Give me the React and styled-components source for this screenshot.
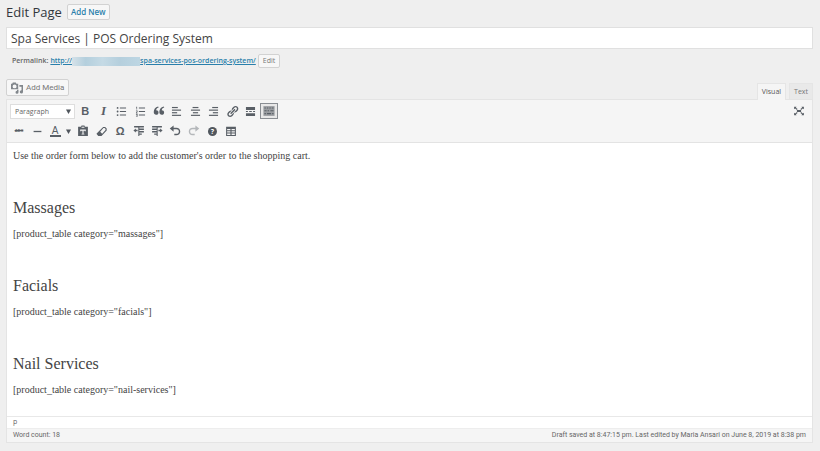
import React, { useState } from 'react';
import styled, { createGlobalStyle, css } from 'styled-components';

const GlobalStyle = createGlobalStyle`
  * {
    box-sizing: border-box;
  }

  body {
    margin: 0;
    background: #efefef;
    color: #666;
    font-family: 'Open Sans', 'Noto Sans', sans-serif;
    font-size: 8px;
  }

  button,
  input,
  select {
    margin: 0;
    font-family: inherit;
  }
`;

const Page = styled.main`
  padding: 2px 7px 8px 6px;
`;

const PageHeader = styled.header`
  display: flex;
  align-items: center;
  gap: 5px;
  height: 20px;
`;

const PageTitle = styled.h1`
  margin: 0;
  color: #32373c;
  font-size: 13px;
  font-weight: 400;
  line-height: 20px;
`;

const buttonLook = css`
  display: inline-flex;
  align-items: center;
  justify-content: center;
  border: 1px solid #d2d2d2;
  border-radius: 2px;
  background: #f7f7f7;
  color: #777;
  font-size: 8px;
  line-height: 10px;
  cursor: pointer;
`;

const AddNewLink = styled.a`
  ${buttonLook}
  height: 16px;
  padding: 0 3px;
  color: #2a7fab;
  font-weight: 600;
  text-decoration: none;
`;

const SmallButton = styled.button`
  ${buttonLook}
  height: 14px;
  padding: 0 4px;
  font-size: 7px;
`;

const MediaButton = styled.button`
  ${buttonLook}
  gap: 3px;
  height: 17px;
  padding: 0 4px;
  font-family: Roboto, 'Open Sans', sans-serif;

  svg {
    color: #82878c;
  }
`;

const TitleInput = styled.input`
  display: block;
  width: 100%;
  height: 22px;
  margin-top: 5px;
  padding: 0 4px;
  border: 1px solid #e0e0e0;
  background: #fff;
  color: #444;
  font-size: 12px;
  outline: none;
`;

const Permalink = styled.div`
  display: flex;
  align-items: center;
  height: 14px;
  margin-top: 5px;
  padding-left: 6px;
  gap: 2px;
  line-height: 14px;

  strong {
    color: #666;
    font-size: 7px;
    font-weight: 600;
  }
`;

const PermalinkUrl = styled.a`
  display: flex;
  align-items: center;
  color: #2a7fab;
  font-size: 7px;
  font-weight: 600;
  text-decoration: underline;
`;

const HiddenDomain = styled.span`
  width: 68px;
  height: 9px;
  background: linear-gradient(90deg, #d5e1e8, #b4cfdd 20%, #c5dae5 45%, #b5cfdd 70%, #bdd6e3);
`;

const EditorTools = styled.div`
  display: flex;
  align-items: flex-start;
  justify-content: space-between;
  height: 20px;
  margin-top: 11px;
`;

const Tabs = styled.div`
  display: flex;
  gap: 3px;
  padding-top: 4px;
`;

const Tab = styled.button`
  height: ${({ $active }) => ($active ? 17 : 16)}px;
  padding: 0 4px;
  border: 1px solid #e5e5e5;
  border-bottom: 0;
  background: ${({ $active }) => ($active ? '#f5f5f5' : '#e9e9e9')};
  color: ${({ $active }) => ($active ? '#555' : '#777')};
  font-size: 7px;
  line-height: 14px;
  cursor: pointer;
`;

const Editor = styled.section`
  border: 1px solid #e4e4e4;
  background: #fff;
`;

const Toolbar = styled.div`
  display: flex;
  justify-content: space-between;
  padding: 1px 5px 1px 3px;
  border-bottom: 1px solid #e3e3e3;
  background: #f5f5f5;
`;

const ToolRow = styled.div`
  display: flex;
  align-items: center;
  height: 20px;
`;

const ToolGroup = styled.div`
  display: grid;
  grid-template-columns: repeat(${({ $count }) => $count}, 1fr);
  width: ${({ $width }) => $width}px;
`;

const ToolButton = styled.button`
  display: flex;
  align-items: center;
  justify-content: center;
  height: 16px;
  padding: 0;
  border: 1px solid ${({ $pressed }) => ($pressed ? '#8a8e93' : 'transparent')};
  background: ${({ $pressed }) => ($pressed ? '#e8e8e8' : 'transparent')};
  color: #595f66;
  cursor: pointer;

  &:disabled {
    color: #b4b7ba;
  }
`;

const Glyph = styled.span`
  font-family: ${({ $serif }) => ($serif ? "'Liberation Serif', serif" : "'Liberation Sans', sans-serif")};
  font-size: ${({ $size }) => $size || 11}px;
  font-weight: ${({ $regular }) => ($regular ? 400 : 700)};
  font-style: ${({ $italic }) => ($italic ? 'italic' : 'normal')};
  line-height: 12px;
  text-decoration: ${({ $strike }) => ($strike ? 'line-through' : 'none')};
`;

const ColorButton = styled(ToolButton)`
  gap: 5px;
  width: 28px;
`;

const ColorLetter = styled.span`
  width: 11px;
  border-bottom: 2px solid #595f66;
  font-family: 'Liberation Sans', sans-serif;
  font-size: 10px;
  line-height: 9px;
  text-align: center;
`;

const SelectWrap = styled.div`
  position: relative;
  width: 65px;
  margin-right: 1px;

  svg {
    position: absolute;
    top: 5px;
    right: 4px;
    pointer-events: none;
  }
`;

const FormatSelect = styled.select`
  display: block;
  width: 100%;
  height: 15px;
  padding: 0 4px;
  appearance: none;
  border: 1px solid #dedede;
  border-radius: 0;
  background: #fff;
  color: #666;
  font-size: 7px;
`;

const Content = styled.div`
  min-height: 273px;
  padding: 6px;
  color: #444;
  font-family: Georgia, 'Liberation Serif', serif;
  font-size: 10px;
  line-height: 14px;
  outline: none;

  p {
    margin: 0 0 11px;
  }

  h2 {
    margin: 0 0 10px;
    font-size: 16px;
    font-weight: 400;
    line-height: 18px;
  }
`;

const PathBar = styled.div`
  height: 12px;
  padding: 0 6px;
  border-top: 1px solid #e8e8e8;
  font-size: 7px;
  line-height: 10px;
`;

const StatusBar = styled.footer`
  display: flex;
  justify-content: space-between;
  padding: 0 6px;
  border-top: 1px solid #ededed;
  background: #f5f5f5;
  font-family: Roboto, 'Open Sans', sans-serif;
  font-size: 7px;
  line-height: 13px;
`;

const Icon = ({ children, size = 13 }) => (
  <svg width={size} height={size} viewBox="0 0 20 20" fill="currentColor" aria-hidden="true">
    {children}
  </svg>
);

const Arrow = () => (
  <svg width="5" height="5" viewBox="0 0 5 5" fill="#50565d" aria-hidden="true">
    <path d="M0 0.500h5L2.500 5z" />
  </svg>
);

const MediaIcon = () => (
  <Icon size={12}>
    <path
      fillRule="evenodd"
      d="M0 3h2l1-2h5l1 2h3v9H0zM6 4a3.300 3.300 0 1 0 0 6.600A3.300 3.300 0 0 0 6 4z"
    />
    <path d="M14 5h6v11.500a2.700 2.700 0 1 1-2.500-2.700V8H14zM10 13h2.500v4a2.500 2.500 0 1 1-2.500-2.500z" />
  </Icon>
);

const BulletIcon = () => (
  <Icon>
    <circle cx="4" cy="4.500" r="1.400" />
    <circle cx="4" cy="10" r="1.400" />
    <circle cx="4" cy="15.500" r="1.400" />
    <path d="M7.500 4H17v1.400H7.500zM7.500 9.300H17v1.400H7.500zM7.500 14.800H17v1.400H7.500z" />
  </Icon>
);

const NumberIcon = () => (
  <Icon>
    <path d="M3.500 2.500h1.300V7H3.800V4h-.800zM3 8.500h2.500v2L4.300 12h1.200v1H3v-1l1.300-1.800V9.500H3zM3 14h2.500v4H3v-.800h1.500v-.800h-1v-.800h1V15H3z" />
    <path d="M7.500 4H17v1.400H7.500zM7.500 9.300H17v1.400H7.500zM7.500 14.800H17v1.400H7.500z" />
  </Icon>
);

const QuoteIcon = () => (
  <Icon size={14}>
    <path d="M9.500 5C6.500 6 6 7.800 6 9c2 0 3.300 1.200 3.300 3S8 15.500 6 15.500 2.500 14 2.500 11.500C2.500 8 4.500 4.500 8.800 3.700zM17.500 5c-3 1-3.500 2.800-3.500 4 2 0 3.300 1.200 3.300 3s-1.300 3.500-3.300 3.500-3.500-1.500-3.500-4c0-3.500 2-7 6.300-7.800z" />
  </Icon>
);

const AlignIcon = ({ align }) => {
  const place = (width) => {
    if (align === 'left') return 3;
    if (align === 'right') return 17 - width;
    return 10 - width / 2;
  };
  return (
    <Icon>
      {[9, 14, 8, 14].map((width, i) => (
        <rect key={i} x={place(width)} y={3 + i * 4} width={width} height="1.800" />
      ))}
    </Icon>
  );
};

const LinkIcon = () => (
  <Icon>
    <path d="M17.740 2.760c1.680 1.690 1.680 4.410 0 6.100l-1.530 1.520c-1.120 1.120-2.700 1.470-4.140 1.090l2.620-2.610.760-.770.760-.760c.840-.840.840-2.200 0-3.040-.840-.850-2.200-.850-3.040 0l-.770.760-3.380 3.380c-.370-1.440-.020-3.020 1.100-4.140l1.520-1.530c1.690-1.680 4.420-1.680 6.100 0zM8.590 13.430l5.340-5.340c.420-.420.420-1.100 0-1.520-.440-.430-1.130-.390-1.530 0l-5.330 5.340c-.420.420-.420 1.100 0 1.520.440.430 1.130.390 1.520 0zm-.760 2.290l4.140-4.150c.380 1.440.030 3.020-1.090 4.140l-1.520 1.530c-1.690 1.680-4.410 1.680-6.100 0-1.680-1.680-1.680-4.420 0-6.100l1.530-1.520c1.120-1.120 2.700-1.470 4.140-1.100l-4.140 4.150c-.850.840-.850 2.200 0 3.050.840.840 2.200.840 3.040 0z" />
  </Icon>
);

const MoreIcon = () => (
  <Icon>
    <path d="M3 3h14v4.500H3zM3 9.300h3v1.500H3zM8 9.300h4v1.500H8zM14 9.300h3v1.500h-3zM3 12.500h14V17H3z" />
  </Icon>
);

const KeyboardIcon = () => (
  <Icon size={14}>
    <path fillOpacity="0.550" d="M2 3h16v14H2z" />
    <path d="M3.500 5h2v1.500h-2zM7 5h2v1.500H7zM10.500 5h2v1.500h-2zM14 5h2.500v1.500H14zM3.500 9h3v1.500h-3zM8 9h2v1.500H8zM12 9h4.500v1.500H12zM3.500 13h2v1.500h-2zM7 13h6v1.500H7zM14.500 13h2v1.500h-2z" />
  </Icon>
);

const RuleIcon = () => (
  <Icon>
    <path d="M4 9h12v2H4z" />
  </Icon>
);

const PasteIcon = () => (
  <Icon size={14}>
    <path
      fillRule="evenodd"
      d="M3 4h4l1-2h4l1 2h4v13H3zM8 4v1.500h4V4zM6 8v2.500h1.500V9.500H9.200V14H8v1h4v-1h-1.200V9.500h1.700v1H14V8z"
    />
  </Icon>
);

const EraserIcon = () => (
  <Icon>
    <path
      fillRule="evenodd"
      d="M12.500 3h3L18 5.500v3L10 17H5l-2.500-3v-1zM13 4.800L8 10.500l3 3 5.200-5.700V6.200l-1.400-1.400z"
    />
  </Icon>
);

const IndentIcon = ({ flip }) => (
  <Icon size={14}>
    <g transform={flip ? 'translate(20 0) scale(-1 1)' : undefined}>
      <path d="M3 3h14v2H3zM9 6.500h8v2H9zM9 10h8v2H9zM9 13.500h5v2H9zM9 17V3h1.500v14zM2 9.300l3.500-3v2H8v2H5.500v2z" />
    </g>
  </Icon>
);

const UndoIcon = ({ flip }) => (
  <Icon size={14}>
    <g transform={flip ? 'translate(20 0) scale(-1 1)' : undefined}>
      <path d="M8 2v3.500h4c3.300 0 5.500 2 5.500 5.200S15.300 16 12 16H9v-2h3c2.200 0 3.500-1.200 3.500-3.300S14.200 7.500 12 7.500H8V11L2.500 6.500z" />
    </g>
  </Icon>
);

const TableIcon = () => (
  <Icon size={14}>
    <path
      fillRule="evenodd"
      d="M3 4h14v13H3zM4.500 7v2h4.700V7zM10.800 7v2h4.700V7zM4.500 10.300v2h4.700v-2zM10.800 10.300v2h4.700v-2zM4.500 13.600v2h4.700v-2zM10.800 13.600v2h4.700v-2z"
    />
  </Icon>
);

const FullscreenIcon = () => (
  <Icon size={14}>
    <path d="M3 4h3.500l-.900 1.300 2.400 2-1 1.100-2.500-2L3 7.500zM17 4h-3.500l.900 1.300-2.400 2 1 1.100 2.500-2L17 7.500zM3 16h3.500l-.900-1.300 2.400-2-1-1.100-2.500 2L3 12.500zM17 16h-3.500l.900-1.300-2.400-2 1-1.100 2.500 2 1.500-1.100zM7 8.500h6v3H7z" />
  </Icon>
);

const HelpBadge = styled.span`
  width: 9px;
  height: 9px;
  border-radius: 50%;
  background: #50565d;
  color: #fff;
  font-size: 7px;
  font-weight: 700;
  line-height: 9px;
  text-align: center;
`;

const mainTools = [
  { label: 'Bold', icon: <Glyph>B</Glyph> },
  { label: 'Italic', icon: <Glyph $serif $italic $size={13}>I</Glyph> },
  { label: 'Bulleted list', icon: <BulletIcon /> },
  { label: 'Numbered list', icon: <NumberIcon /> },
  { label: 'Blockquote', icon: <QuoteIcon /> },
  { label: 'Align left', icon: <AlignIcon align="left" /> },
  { label: 'Align center', icon: <AlignIcon align="center" /> },
  { label: 'Align right', icon: <AlignIcon align="right" /> },
  { label: 'Insert link', icon: <LinkIcon /> },
  { label: 'Read more', icon: <MoreIcon /> },
];

const lineTools = [
  { label: 'Strikethrough', icon: <Glyph $size={4} $strike>ABC</Glyph> },
  { label: 'Horizontal line', icon: <RuleIcon /> },
];

const extraTools = [
  { label: 'Paste as text', icon: <PasteIcon /> },
  { label: 'Clear formatting', icon: <EraserIcon /> },
  { label: 'Special character', icon: <Glyph>Ω</Glyph> },
  { label: 'Decrease indent', icon: <IndentIcon /> },
  { label: 'Increase indent', icon: <IndentIcon flip /> },
  { label: 'Undo', icon: <UndoIcon /> },
  { label: 'Redo', icon: <UndoIcon flip />, disabled: true },
  { label: 'Keyboard shortcuts', icon: <HelpBadge>?</HelpBadge> },
  { label: 'Table', icon: <TableIcon /> },
];

const sections = [
  { title: 'Massages', category: 'massages' },
  { title: 'Facials', category: 'facials' },
  { title: 'Nail Services', category: 'nail-services' },
];

const Tools = ({ items }) =>
  items.map((item) => (
    <ToolButton key={item.label} type="button" aria-label={item.label} disabled={item.disabled}>
      {item.icon}
    </ToolButton>
  ));

const App = () => {
  const [title, setTitle] = useState('Spa Services | POS Ordering System');
  const [tab, setTab] = useState('Visual');
  const [showMore, setShowMore] = useState(true);

  return (
    <Page>
      <GlobalStyle />
      <PageHeader>
        <PageTitle>Edit Page</PageTitle>
        <AddNewLink href="#new">Add New</AddNewLink>
      </PageHeader>
      <TitleInput aria-label="Page title" value={title} onChange={(e) => setTitle(e.target.value)} />
      <Permalink>
        <strong>Permalink:</strong>
        <PermalinkUrl href="#permalink">
          <span>http://</span>
          <HiddenDomain />
          <span>spa-services-pos-ordering-system/</span>
        </PermalinkUrl>
        <SmallButton type="button">Edit</SmallButton>
      </Permalink>
      <EditorTools>
        <MediaButton type="button">
          <MediaIcon />
          Add Media
        </MediaButton>
        <Tabs>
          {['Visual', 'Text'].map((name) => (
            <Tab key={name} type="button" $active={tab === name} onClick={() => setTab(name)}>
              {name}
            </Tab>
          ))}
        </Tabs>
      </EditorTools>
      <Editor>
        <Toolbar>
          <div>
            <ToolRow>
              <SelectWrap>
                <FormatSelect aria-label="Text format" defaultValue="Paragraph">
                  <option>Paragraph</option>
                  <option>Heading 1</option>
                  <option>Heading 2</option>
                </FormatSelect>
                <Arrow />
              </SelectWrap>
              <ToolGroup $count={11} $width={202}>
                <Tools items={mainTools} />
                <ToolButton
                  type="button"
                  aria-label="Toolbar toggle"
                  aria-pressed={showMore}
                  $pressed={showMore}
                  onClick={() => setShowMore(!showMore)}
                >
                  <KeyboardIcon />
                </ToolButton>
              </ToolGroup>
            </ToolRow>
            {showMore && (
              <ToolRow>
                <ToolGroup $count={2} $width={36}>
                  <Tools items={lineTools} />
                </ToolGroup>
                <ColorButton type="button" aria-label="Text color">
                  <ColorLetter>A</ColorLetter>
                  <Arrow />
                </ColorButton>
                <ToolGroup $count={9} $width={166}>
                  <Tools items={extraTools} />
                </ToolGroup>
              </ToolRow>
            )}
          </div>
          <ToolRow>
            <ToolButton type="button" aria-label="Fullscreen">
              <FullscreenIcon />
            </ToolButton>
          </ToolRow>
        </Toolbar>
        <Content contentEditable suppressContentEditableWarning spellCheck={false} role="textbox" aria-label="Page content">
          <p>Use the order form below to add the customer's order to the shopping cart.</p>
          {sections.map(({ title: heading, category }) => (
            <React.Fragment key={category}>
              <p>&nbsp;</p>
              <h2>{heading}</h2>
              <p>[product_table category="{category}"]</p>
            </React.Fragment>
          ))}
        </Content>
        <PathBar>p</PathBar>
        <StatusBar>
          <span>Word count: 18</span>
          <span>Draft saved at 8:47:15 pm. Last edited by Maria Ansari on June 8, 2019 at 8:38 pm</span>
        </StatusBar>
      </Editor>
    </Page>
  );
};

export default App;
